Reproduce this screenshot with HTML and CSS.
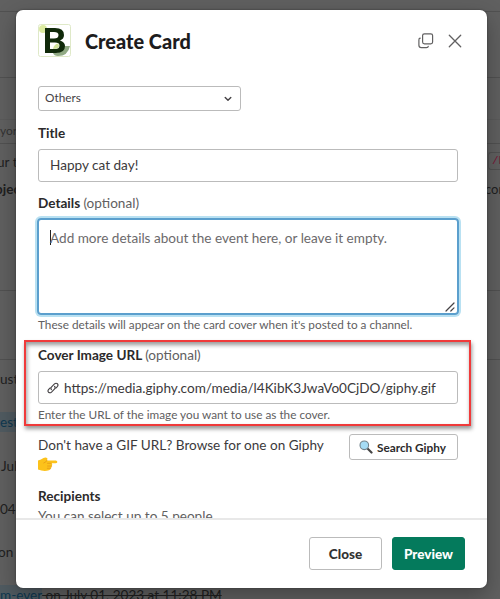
FILE: index.html
```html
<!DOCTYPE html>
<html lang="en">
<head>
<meta charset="utf-8">
<title>Create Card</title>
<link rel="stylesheet" href="styles.css">
</head>
<body>
<div class="channel">
  <div class="row row-a"></div>
  <div class="row row-b"></div>
  <div class="row row-c"></div>
  <div class="row row-d">yor</div>
  <div class="row row-e">
    <div class="line"><span class="ur">ur t</span><code>/b</code></div>
    <div class="line second"><b>bjec</b><span class="con">con</span></div>
  </div>
  <div class="row row-f"></div>
  <div class="messages">
    <p>ust</p>
    <p><a>est</a></p>
    <p class="indent">Jul</p>
    <p>04</p>
    <p class="on">on .</p>
    <p><a>m-ever</a><s> on July 01, 2023 at 11:28 PM</s></p>
  </div>
</div>

<section class="modal">
  <header class="head">
    <svg class="logo" viewBox="0 0 33 33">
      <rect x=".5" y=".5" width="32" height="32" rx="2" fill="#fff" stroke="#dfe9c8"/>
      <circle cx="5" cy="5" r="4" fill="#dcebA0"/>
      <path d="M15 29Q25 29 26 22L32 22Q30 32 20 32Q16 32 15 29Z" fill="#91aa84"/>
      <path fill-rule="evenodd" d="M7 4H17Q26 4 26 11Q26 15 22 16.500Q27 18 27 22Q27 29 18 29H7ZM12 8V14.500H16Q20.500 14.500 20.500 11Q20.500 8 16 8ZM12 18.500V25H17Q21.500 25 21.500 21.500Q21.500 18.500 17 18.500Z" fill="#10290a"/>
      <path d="M15 25Q16 20 20 19.500Q22 22 20 24Q18 25 15 25Z" fill="#cfe29a"/>
    </svg>
    <h1>Create Card</h1>
    <svg class="popout" viewBox="0 0 16 16" fill="none" stroke="#616061" stroke-width="1.2" stroke-linecap="round"><rect x="4.600" y=".8" width="10" height="10" rx="1.800"/><path d="M2.200 5.200Q.9 5.200 .9 7V12.200Q.9 14.600 3.300 14.600H8.400Q10.200 14.600 10.300 13.300"/></svg>
    <svg class="close" viewBox="0 0 14 14" fill="none" stroke="#616061" stroke-width="1.3" stroke-linecap="round"><path d="M1.300 1.300L12.700 12.700M12.700 1.300L1.300 12.700"/></svg>
  </header>

  <div class="body">
    <div class="select"><span>Others</span><svg viewBox="0 0 8 6" fill="none" stroke="#454245" stroke-width="1.400" stroke-linecap="round" stroke-linejoin="round"><path d="M1.200 1.500L4 4.300L6.800 1.500"/></svg></div>
    <div class="label l-title">Title</div>
    <div class="input"><span>Happy cat day!</span></div>
    <div class="label l-details">Details <span>(optional)</span></div>
    <div class="textarea"><i class="caret"></i><span>Add more details about the event here, or leave it empty.</span>
      <svg class="grip" viewBox="0 0 10 10" stroke="#454245" stroke-width="1.200" stroke-linecap="round"><path d="M1 9L9 1M5.800 9L9 5.800"/></svg>
    </div>
    <div class="hint">These details will appear on the card cover when it's posted to a channel.</div>
    <div class="cover">
      <div class="label l-cover">Cover Image URL <span>(optional)</span></div>
      <div class="input"><svg class="link" viewBox="0 0 12 12" fill="none" stroke="#454245" stroke-width="1.150" stroke-linecap="round"><path d="M4.400 7.600Q3.300 6.200 4.600 4.800L7.500 1.900Q9 .6 10.500 1.800Q11.600 3.200 10.300 4.600L8.800 6.100"/><path d="M7.600 4.400Q8.700 5.800 7.400 7.200L4.500 10.100Q3 11.400 1.500 10.200Q.4 8.800 1.700 7.400L3.200 5.900"/></svg><span>https://media.giphy.com/media/l4KibK3JwaVo0CjDO/giphy.gif</span></div>
      <div class="hint">Enter the URL of the image you want to use as the cover.</div>
    </div>
    <div class="browse">
      <div class="browse-text"><span>Don't have a GIF URL? Browse for one on Giphy</span>
        <svg class="hand" viewBox="0 0 20 15"><path d="M0 3.500Q3 2.800 5.500 1Q8 0 9.500 1.500L9 3.400H18Q19.600 3.800 19.300 5.200Q19 6.300 17.500 6.300H13.500Q15 7.500 13.700 9Q14 10.400 12.700 11.300Q12.800 13 11 13.300Q6 15 0 12.600Z" fill="#fcc21b"/><path d="M9 3.400Q8 5.500 5.800 6M13.300 6.300H9.500M13.700 9H9.500M12.700 11.300H9.300" fill="none" stroke="#e59a16" stroke-width=".8" stroke-linecap="round"/></svg>
      </div>
      <button class="search"><svg viewBox="0 0 14 14"><path d="M8.500 8.500L12.500 12.500" stroke="#444" stroke-width="2.200" stroke-linecap="round"/><circle cx="5.300" cy="5.300" r="4.300" fill="#a5dcf5" stroke="#72838c" stroke-width="1.100"/></svg><span>Search Giphy</span></button>
    </div>
    <div class="label l-rec">Recipients</div>
    <div class="you">You can select up to 5 people.</div>
  </div>

  <footer class="foot">
    <button class="btn">Close</button>
    <button class="btn primary">Preview</button>
  </footer>
</section>
</body>
</html>
```
FILE: styles.css
```css
* { box-sizing: border-box; }
body { margin: 0; width: 500px; height: 599px; overflow: hidden; position: relative; background: #606060; font-family: Lato, "Liberation Sans", sans-serif; font-size: 13.57px; color: #1d1c1d; }
svg { display: block; flex: none; }
span, b, a, s { white-space: nowrap; }

.channel { height: 599px; overflow: hidden; color: #202020; }
.row { border-bottom: 1px solid #515151; }
.row-a { height: 12px; }
.row-b { height: 66px; }
.row-c { height: 42px; border-color: #5b5b5b; }
.row-d { height: 24px; padding-top: 2px; font-size: 12px; line-height: 18px; color: #333; }
.row-e { height: 147px; padding-top: 8px; }
.line { display: flex; justify-content: space-between; height: 20px; line-height: 20px; }
.ur { margin-left: -3px; }
.line code { width: 12px; height: 18px; padding-left: 3px; border: 1px solid #515151; border-right: 0; border-radius: 3px 0 0 3px; font: 11px/17px "Liberation Mono", monospace; color: #7b1637; white-space: nowrap; }
.line.second { margin-top: 7px; }
.line b { margin-left: -5px; }
.con { width: 15px; font-size: 13px; }
.row-f { height: 69px; }
.messages { padding-top: 9px; }
.messages p { margin: 0 0 23.3px; height: 20px; line-height: 20px; white-space: nowrap; }
.messages .indent { padding-left: 1px; }
.messages .on { margin-left: -2px; }
.messages a { display: inline-block; color: #0e3850; background: #505b61; }
.messages s { letter-spacing: 0; }

.modal { position: absolute; left: 16px; top: 10px; width: 471px; height: 578px; display: flex; flex-direction: column; background: #fff; border-radius: 7px; overflow: hidden; box-shadow: 0 0 2px #333, 0 8px 22px rgba(0,0,0,.3); }
.head { height: 76px; padding: 14px 25px 0 22px; display: flex; align-items: flex-start; }
.logo { width: 33px; height: 33px; }
h1 { margin: 3px auto 0 14px; font-size: 19.9px; line-height: 28px; font-weight: 900; white-space: nowrap; }
.popout { width: 16px; height: 16px; margin: 9px 14px 0 0; }
.close { width: 14px; height: 14px; margin-top: 10px; }

.body { height: 432px; padding: 0 29px 0 22px; overflow: hidden; }
.select { width: 203px; height: 25px; padding: 0 8px 2px 6px; display: flex; justify-content: space-between; align-items: center; border: 1px solid #bbb; border-radius: 3px; font-size: 11.8px; color: #454245; }
.select svg { width: 8px; height: 6px; margin-top: 2px; }
.label { height: 20px; line-height: 20px; font-weight: 700; white-space: nowrap; color: #2b2a2b; }
.label span { font-weight: 400; color: #616061; }
.l-title { margin-top: 12px; }
.input { width: 420px; height: 33px; margin-top: 6px; padding: 0 0 2px 11px; display: flex; align-items: center; border: 1px solid #bbb; border-radius: 3px; color: #3c3a3c; }
.l-details { margin-top: 11px; }
.textarea { position: relative; width: 422px; height: 97px; margin: 5px 0 0 -1px; padding: 8px 12px; display: flex; border: 2px solid #5b9fcd; border-radius: 4px; box-shadow: 0 0 0 2px #b9e1f2; line-height: 20px; color: #6c6a6c; }
.caret { width: 1px; height: 15px; margin: 2px -1px 0 -1px; background: #222; }
.grip { position: absolute; right: 2px; bottom: 1px; width: 10px; height: 10px; }
.hint { height: 18px; line-height: 18px; font-size: 11.77px; color: #616061; white-space: nowrap; }
.textarea + .hint { margin-top: 1px; }
.cover { width: 447px; height: 86px; margin: 6px 0 0 -14px; padding: 3px 0 0 12px; border: 2px solid #f03a3a; box-shadow: 1px 3px 4px rgba(0,0,0,.4), inset 1px 3px 4px rgba(0,0,0,.4); }
.cover .input { padding: 0 0 0 8px; }
.cover .hint { margin-top: 2px; }
.link { width: 12px; height: 12px; margin-right: 5px; }
.browse { width: 420px; height: 52px; display: flex; justify-content: space-between; margin-top: 8px; }
.browse-text { line-height: 22px; color: #3c3a3c; }
.hand { width: 20px; height: 15px; margin-top: 1px; }
.search { width: 109px; height: 26px; padding: 0 0 0 9px; display: flex; align-items: center; gap: 4px; border: 1px solid #bbb; border-radius: 3px; background: #fff; font: 700 11.77px Lato, sans-serif; color: #2b2a2b; }
.search svg { width: 14px; height: 14px; }
.you { height: 22px; line-height: 22px; margin-top: -1px; color: #616061; }

.foot { height: 70px; border-top: 2px solid #e8e8e8; padding: 17px 22px 0; display: flex; justify-content: flex-end; gap: 10px; }
.btn { width: 73px; height: 33px; padding: 0; border: 1px solid #bbb; border-radius: 3px; background: #fff; font: 900 13.5px Lato, sans-serif; color: #333; }
.primary { background: #047a5c; border-color: #047a5c; color: #fff; }
```
